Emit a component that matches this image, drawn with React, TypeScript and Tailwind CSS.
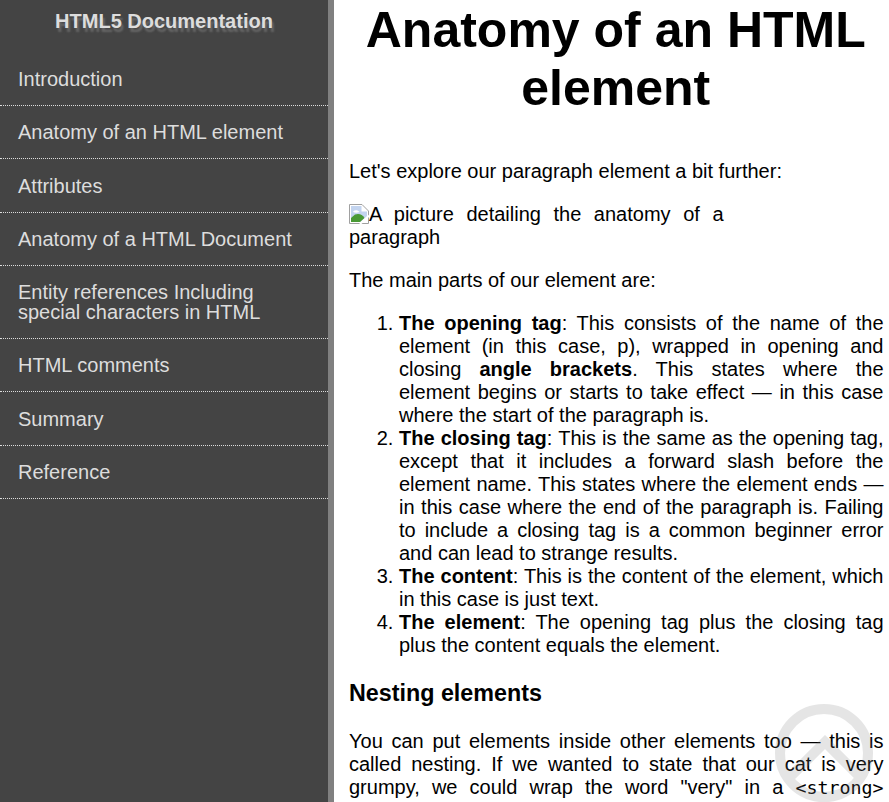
export default function App() {
  const items = ["Introduction", "Anatomy of an HTML element", "Attributes", "Anatomy of a HTML Document", "Entity references Including special characters in HTML", "HTML comments", "Summary", "Reference"];
  return (
    <div className="relative flex h-[802px] w-[889px] overflow-hidden bg-white font-['Liberation_Sans',Arial,sans-serif] text-[20px] leading-[23px] text-black">
      <nav className="h-full w-[334px] shrink-0 border-r-[6px] border-[#808080] bg-[#444444] text-[#dddddd]">
        <h2 className="h-[52.9px] pt-[10px] text-center text-[20px] font-bold leading-[23px] [text-shadow:2px_4px_2px_#666666]">HTML5 Documentation</h2>
        <ul>
          {items.map((t) => (
            <li key={t} className="border-b border-dotted border-[#dddddd] px-[18px] py-[16.13px] text-[20px] leading-[20px]">{t}</li>
          ))}
        </ul>
      </nav>
      <main className="min-w-0 flex-1 pl-[15px] pr-[5.5px] text-justify">
        <h1 className="pr-[1px] pt-[1px] text-center text-[50px] font-bold leading-[58px]">Anatomy of an HTML element</h1>
        <p className="mb-[20px] mt-[43px] text-left">Let's explore our paragraph element a bit further:</p>
        <p className="mb-[20px]">
          <span className="inline-block w-[374.5px] text-justify">
            <svg className="inline-block h-5 w-5 align-[-3px]" viewBox="0 0 20 20">
              <path d="M0.5 0.5H13L19.5 7V19.5H0.5Z" fill="#ffffff" stroke="#a0a0a0" />
              <path d="M2 2H12.5V7.5H18V13L11.5 18H2Z" fill="#c3d4ef" />
              <path d="M4 7.5C6 5.5 9 6 10.5 8C8 9 5 9 4 7.5Z" fill="#ffffff" />
              <path d="M2 18V14L6 10.5C10 9 13.5 10.5 15.5 14L11 18Z" fill="#4a9a35" />
              <path d="M11 20L20 11.5" stroke="#ffffff" strokeWidth="2" />
            </svg>
            A picture detailing the anatomy of a paragraph
          </span>
        </p>
        <p className="mb-[20px] text-left">The main parts of our element are:</p>
        <ol className="mb-[20px] list-decimal pl-[50px]">
          <li><b>The opening tag</b>: This consists of the name of the element (in this case, p), wrapped in opening and closing <b>angle brackets</b>. This states where the element begins or starts to take effect — in this case where the start of the paragraph is.</li>
          <li><b>The closing tag</b>: This is the same as the opening tag, except that it includes a forward slash before the element name. This states where the element ends — in this case where the end of the paragraph is. Failing to include a closing tag is a common beginner error and can lead to strange results.</li>
          <li><b>The content</b>: This is the content of the element, which in this case is just text.</li>
          <li><b>The element</b>: The opening tag plus the closing tag plus the content equals the element.</li>
        </ol>
        <h3 className="mb-[24px] mt-[24px] text-left text-[23.3px] font-bold leading-[25px]">Nesting elements</h3>
        <p>You can put elements inside other elements too — this is called nesting. If we wanted to state that our cat is very grumpy, we could wrap the word "very" in a <code className="font-['DejaVu_Sans_Mono',monospace] text-[18.3px]">&lt;strong&gt;</code> element, which means that the word is to be strongly emphasized:</p>
      </main>
      <svg className="absolute left-[775px] top-[704px] h-[98px] w-[98px] opacity-20" viewBox="0 0 98 98" fill="none" stroke="#808080" strokeWidth="10">
        <circle cx="49" cy="49" r="44" />
        <path d="M14 74L50 38L86 74" />
      </svg>
    </div>
  );
}
